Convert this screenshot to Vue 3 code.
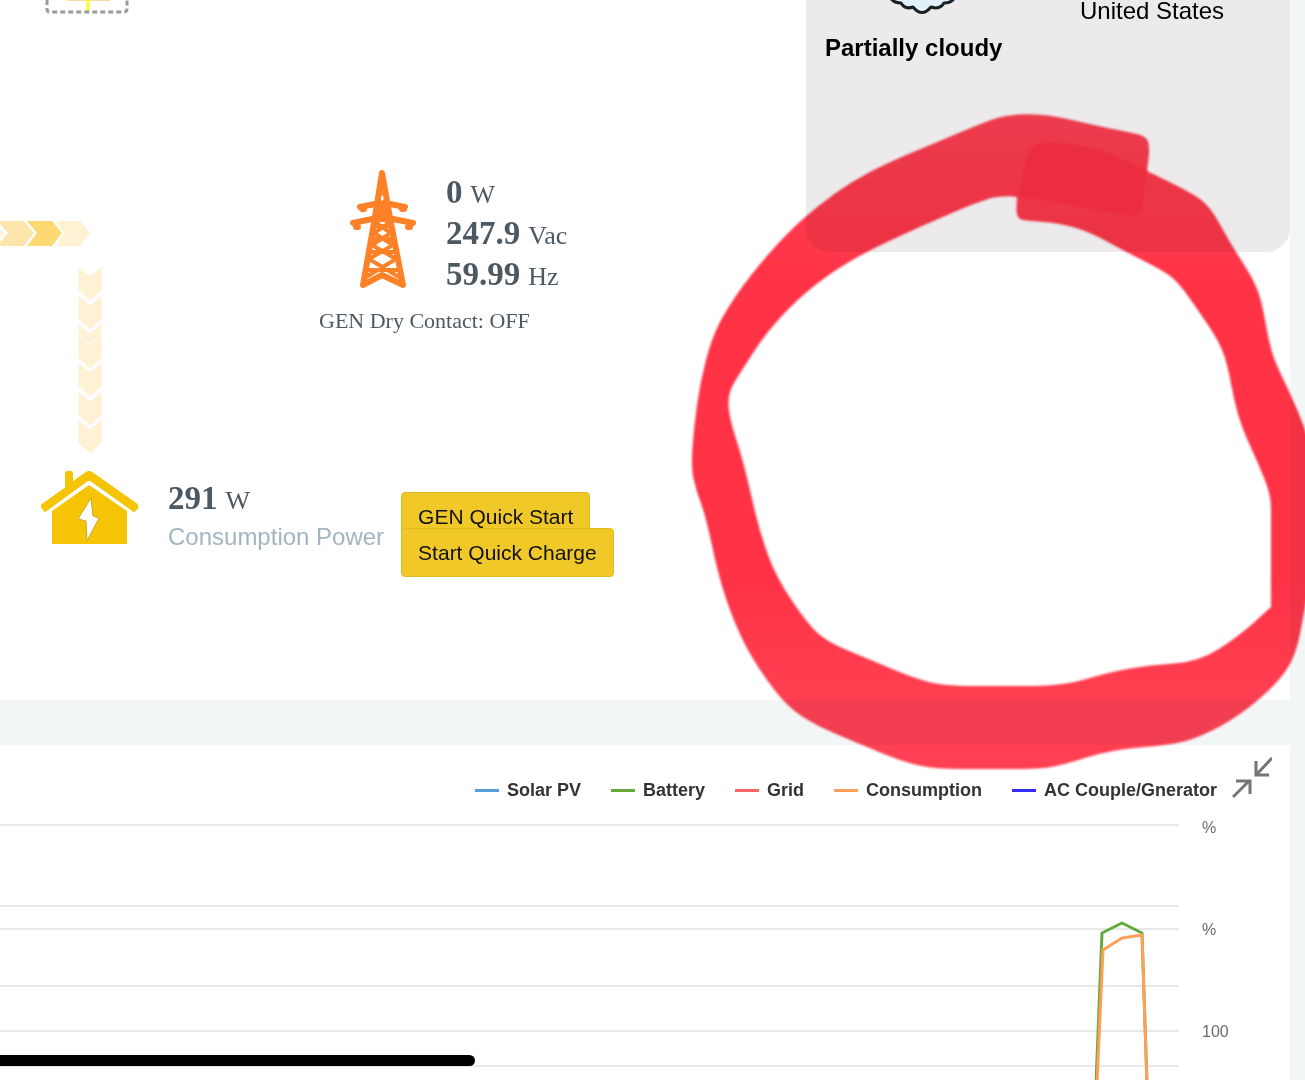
<script setup>
    import { ref, computed } from 'vue';

    const readings = ref([
        { value: '0', unit: 'W' },
        { value: '247.9', unit: 'Vac' },
        { value: '59.99', unit: 'Hz' },
    ]);

    const series = ref([
        { name: 'Solar PV', key: 'solar' },
        { name: 'Battery', key: 'battery' },
        { name: 'Grid', key: 'grid' },
        { name: 'Consumption', key: 'load' },
        { name: 'AC Couple/Gnerator', key: 'ac-couple' },
    ]);

    const gridLines = [9, 90, 113, 170, 215, 250];
    const axisLabels = ['%', '%', '100'];

    // start of every arrow in the column above the house
    const downArrows = [0, 29, 57, 68, 96, 125, 153];

    // outer and inner edge of the marker ring
    const outer = [
        [1150, 147], [1146, 136], [1128, 132], [1098, 126], [1055, 116], [1031, 114], [1007, 115], [987, 121],
        [935, 143], [887, 163], [851, 182], [819, 205], [788, 232], [752, 273], [728, 307], [712, 337],
        [700, 383], [694, 427], [691, 467], [696, 490], [706, 517], [720, 583], [740, 637], [764, 677],
        [788, 707], [815, 725], [855, 742], [903, 762], [935, 769], [987, 769], [1039, 769], [1063, 765],
        [1110, 750], [1170, 745], [1198, 738], [1238, 717], [1278, 683], [1296, 655], [1304, 613], [1314, 560],
        [1314, 460], [1305, 428], [1290, 393], [1274, 360], [1268, 337], [1262, 303], [1254, 280], [1230, 243],
        [1210, 206], [1190, 192], [1147, 171], [1147, 171],
    ];
    const inner = [
        [1007, 196], [1017, 197], [1017, 197], [1016, 219], [1030, 221], [1059, 223], [1090, 232], [1126, 252],
        [1162, 270], [1178, 282], [1198, 310], [1220, 343], [1228, 367], [1234, 400], [1242, 428], [1258, 463],
        [1271, 495], [1271, 520], [1271, 607], [1271, 607], [1238, 637], [1198, 662], [1150, 665], [1110, 672],
        [1063, 686], [1003, 686], [943, 686], [911, 677], [871, 660], [827, 642], [807, 623], [776, 577],
        [760, 533], [750, 490], [742, 457], [729, 417], [728, 393], [740, 373], [768, 330], [807, 290],
        [855, 257], [919, 227], [987, 198],
    ];
    const patch = [
        [1028, 144], [1060, 142], [1100, 149], [1147, 171], [1147, 171], [1141, 214], [1130, 216], [1079, 206],
        [1019, 196], [1019, 196],
    ];

    // closed curve running through the middle of each pair of points
    const smooth = (points) => {
        const mid = (a, b) => `${(a[0] + b[0]) / 2} ${(a[1] + b[1]) / 2}`;
        const last = points[points.length - 1];
        let d = `M${mid(last, points[0])}`;
        points.forEach((p, i) => {
            d += `Q${p[0]} ${p[1]} ${mid(p, points[(i + 1) % points.length])}`;
        });
        return d + 'Z';
    };

    const ringPath = computed(() => smooth(outer) + smooth(inner));
    const patchPath = computed(() => smooth(patch));
</script>

<template>
    <main class="page">
        <section class="panel overview">
            <div class="flow">
                <svg class="node inverter" width="84" height="14" viewBox="0 0 84 14">
                    <path d="M22 0H65" stroke="#f3dfa4" stroke-width="2" />
                    <path d="M43 0V11" stroke="#fffb1e" stroke-width="3" />
                    <path d="M2 0V9Q2 12 5 12H79Q82 12 82 9V0" fill="none" stroke="#9a9a9a" stroke-width="3" stroke-dasharray="5 3" />
                </svg>

                <svg class="node arrows-right" width="90" height="25" viewBox="0 0 90 25">
                    <path d="M0 8L4 12L0 17Z" fill="#fff1d4" />
                    <path d="M0 0H24L34 12L24 25H0V21L8 12L0 3Z" fill="#fee5ab" />
                    <path d="M27 0H52L62 12L52 25H27L37 12Z" fill="#fed971" />
                    <path d="M56 0H80L90 12L80 25H56L64 12Z" fill="#fff1d4" />
                </svg>

                <svg class="node arrows-down" width="24" height="188" viewBox="0 0 24 188">
                    <path v-for="y in downArrows" :key="y" :d="`M0 ${y}L12 ${y + 10}L24 ${y}V${y + 24}L12 ${y + 35}L0 ${y + 24}Z`" fill="#fff1d4" stroke="#fff" stroke-width="1" />
                </svg>

                <div class="node generator">
                    <div class="generator-main">
                        <svg class="tower" width="70" height="122" viewBox="0 0 70 122" fill="none" stroke="#ff8127" stroke-linecap="round" stroke-linejoin="round">
                            <path d="M34 5L26 55L15 117L34 107L55 117L43 55Z" stroke-width="6" />
                            <path d="M34 6L31 26H37Z" stroke-width="3" />
                            <path d="M12 39L27 36H42L57 39M5 55L24 51H45L65 55" stroke-width="6" />
                            <path d="M14 41H16M54 41H56M8 59H10M60 59H62" stroke-width="6" />
                            <path d="M30 32L38 39L29 46L41 55L26 65L45 77L21 91L51 109M38 32L31 39L40 46L28 55L43 65L24 77L48 91L18 109" stroke-width="4" />
                            <path d="M29 46H40M28 58H41M26 71H43M24 84H46M20 102H50" stroke-width="4" />
                        </svg>
                        <div class="readings">
                            <div class="reading" v-for="(item, index) in readings" :key="index">
                                <b>{{ item.value }}</b> <span>{{ item.unit }}</span>
                            </div>
                        </div>
                    </div>
                    <div class="dry-contact">GEN Dry Contact: OFF</div>
                </div>

                <div class="node home">
                    <svg class="house" width="100" height="76" viewBox="0 0 100 76">
                        <path d="M2 35L26 18V3Q26 2 27 2H31Q32 2 32 3V13L46 3Q49 1 52 3L96 34Q98 36 97 38L94 41L49 9L5 41L2 37Z" fill="#f5c505" stroke="#f5c505" stroke-width="2" stroke-linejoin="round" />
                        <path d="M12 41L49 15L87 41V74H12Z" fill="#f5c505" />
                        <path d="M51 28L53 46L59 48L47 71L46 51L38 49Z" fill="#fff" stroke="#c9a82c" stroke-width="1" />
                    </svg>
                    <div class="consumption">
                        <div class="reading"><b>291</b> <span>W</span></div>
                        <div class="caption">Consumption Power</div>
                    </div>
                    <div class="actions">
                        <button type="button">GEN Quick Start</button>
                        <button type="button">Start Quick Charge</button>
                    </div>
                </div>
            </div>

            <aside class="weather">
                <svg class="cloud" width="70" height="16" viewBox="0 0 70 16">
                    <path d="M2 -3Q5 3 13 3Q17 10 25 7Q34 18 43 7Q52 10 56 3Q64 3 67 -3" fill="#e2f0fb" stroke="#172126" stroke-width="3" stroke-linejoin="round" />
                </svg>
                <div class="country">United States</div>
                <div class="condition">Partially cloudy</div>
            </aside>
        </section>

        <section class="panel chart">
            <div class="chart-header">
                <ul class="legend">
                    <li v-for="item in series" :key="item.key">
                        <span class="legend-line" :class="item.key"></span>{{ item.name }}
                    </li>
                </ul>
                <button type="button" class="collapse" aria-label="Collapse">
                    <svg width="40" height="43" viewBox="0 0 40 43" fill="none" stroke="#757575" stroke-width="3">
                        <path d="M40 1L25 17M24 4V18H37" />
                        <path d="M1 40L17 24M4 24H18V37" />
                    </svg>
                </button>
            </div>
            <div class="chart-body">
                <svg class="plot" viewBox="0 0 1179 264">
                    <path v-for="y in gridLines" :key="y" :d="`M0 ${y}H1179`" stroke="#e8e8e8" stroke-width="2" />
                    <path d="M1096 268L1102 117L1122 107L1142 117L1147 268" fill="none" stroke="#63aa3b" stroke-width="3" stroke-linejoin="round" />
                    <path d="M1097 268L1103 134L1122 122L1142 119L1147 268" fill="none" stroke="#ffa05a" stroke-width="3" stroke-linejoin="round" />
                </svg>
                <div class="axis">
                    <span v-for="(label, index) in axisLabels" :key="index">{{ label }}</span>
                </div>
            </div>
        </section>

        <svg class="marker" viewBox="0 0 1305 1080" aria-hidden="true">
            <defs>
                <linearGradient id="marker-ink" gradientUnits="userSpaceOnUse" x1="0" y1="115" x2="0" y2="770">
                    <stop offset="0" stop-color="#ff4153" />
                    <stop offset="0.28" stop-color="#ff3246" />
                    <stop offset="0.7" stop-color="#ff3246" />
                    <stop offset="0.9" stop-color="#ff4052" />
                </linearGradient>
            </defs>
            <path class="ink" :d="ringPath" fill="url(#marker-ink)" fill-rule="evenodd" />
            <path class="ink" :d="patchPath" fill="#ff3044" />
        </svg>
        <div class="home-bar"></div>
    </main>
</template>

<style>
    body {
        margin: 0;
        background-color: #f2f6f7;
    }
</style>

<style scoped>
    .page {
        position: relative;
        display: flex;
        flex-direction: column;
        gap: 45px;
        min-height: 100vh;
        overflow: hidden;
        box-sizing: border-box;
        padding-right: 15px;
        background-color: #f2f6f7;
        font-family: "Liberation Sans", Arial, sans-serif;
        color: #000;
    }

    .panel {
        background-color: #fff;
    }

    .overview {
        display: flex;
        align-items: flex-start;
    }

    .flow {
        position: relative;
        flex: 1;
        min-height: 700px;
    }

    .node {
        position: absolute;
    }

    .inverter {
        left: 45px;
        top: 0;
    }

    .arrows-right {
        left: 0;
        top: 221px;
    }

    .arrows-down {
        left: 78px;
        top: 266px;
    }

    .generator {
        left: 319px;
        top: 168px;
        color: #4c5862;
        font-family: "Liberation Serif", "Times New Roman", serif;
    }

    .generator-main {
        display: flex;
        gap: 28px;
        padding-left: 29px;
    }

    .readings {
        padding-top: 4px;
    }

    .reading {
        display: flex;
        align-items: baseline;
        gap: 8px;
        height: 41px;
        font-family: "Liberation Serif", "Times New Roman", serif;
        font-size: 26px;
        line-height: 41px;
        color: #4c5862;
        white-space: nowrap;
    }

    .reading b {
        font-size: 33px;
    }

    .dry-contact {
        margin-top: 13px;
        font-size: 22px;
        line-height: 26px;
        white-space: nowrap;
    }

    .home {
        left: 40px;
        top: 470px;
        display: flex;
        align-items: flex-start;
    }

    .consumption {
        margin: 8px 17px 0 28px;
    }

    .caption {
        font-size: 24px;
        line-height: 36px;
        color: #a3b5be;
        white-space: nowrap;
    }

    .actions {
        display: flex;
        flex-direction: column;
        align-items: flex-start;
        margin-top: 22px;
    }

    .actions button {
        height: 49px;
        padding: 0 16px;
        border: 1px solid #dfba25;
        border-radius: 4px;
        background-color: #f0c929;
        color: #111;
        font-family: inherit;
        font-size: 21px;
        white-space: nowrap;
    }

    .actions button + button {
        margin-top: -13px;
    }

    .weather {
        display: grid;
        grid-template-columns: 255px 1fr;
        grid-template-rows: 22px 28px;
        row-gap: 12px;
        width: 484px;
        min-height: 252px;
        box-sizing: border-box;
        padding: 0 19px;
        border-radius: 0 0 24px 24px;
        background-color: #eceaeb;
        font-size: 24px;
    }

    .cloud {
        margin-left: 63px;
    }

    .country {
        line-height: 22px;
    }

    .condition {
        font-weight: bold;
        line-height: 28px;
    }

    .chart {
        flex: 1;
    }

    .chart-header {
        display: flex;
        justify-content: flex-end;
        align-items: flex-end;
        gap: 15px;
        padding: 12px 18px 0 0;
    }

    .legend {
        display: flex;
        gap: 30px;
        margin: 0;
        padding: 0;
        list-style: none;
        font-size: 18px;
        font-weight: bold;
        line-height: 20px;
        color: #333;
    }

    .legend li {
        display: flex;
        align-items: center;
        gap: 8px;
        white-space: nowrap;
    }

    .legend-line {
        width: 24px;
        height: 3px;
    }

    .solar {
        background-color: #559fd8;
    }

    .battery {
        background-color: #63aa3b;
    }

    .grid {
        background-color: #fb6566;
    }

    .load {
        background-color: #ffa05a;
    }

    .ac-couple {
        background-color: #342bff;
    }

    .collapse {
        display: flex;
        padding: 0;
        border: 0;
        background: none;
    }

    .chart-body {
        display: flex;
        align-items: flex-start;
        gap: 23px;
        padding-top: 16px;
    }

    .plot {
        flex: 1;
        min-width: 0;
    }

    .axis {
        display: flex;
        flex-direction: column;
        gap: 84px;
        width: 88px;
        padding-top: 3px;
        font-size: 16px;
        line-height: 18px;
        color: #6b6b6b;
    }

    .marker {
        position: absolute;
        top: 0;
        right: 0;
        width: 100%;
        pointer-events: none;
        mix-blend-mode: multiply;
    }

    .ink {
        filter: blur(1px);
    }

    .home-bar {
        position: absolute;
        left: 0;
        bottom: 14px;
        width: 475px;
        height: 11px;
        border-radius: 0 6px 6px 0;
        background-color: #000;
    }
</style>
